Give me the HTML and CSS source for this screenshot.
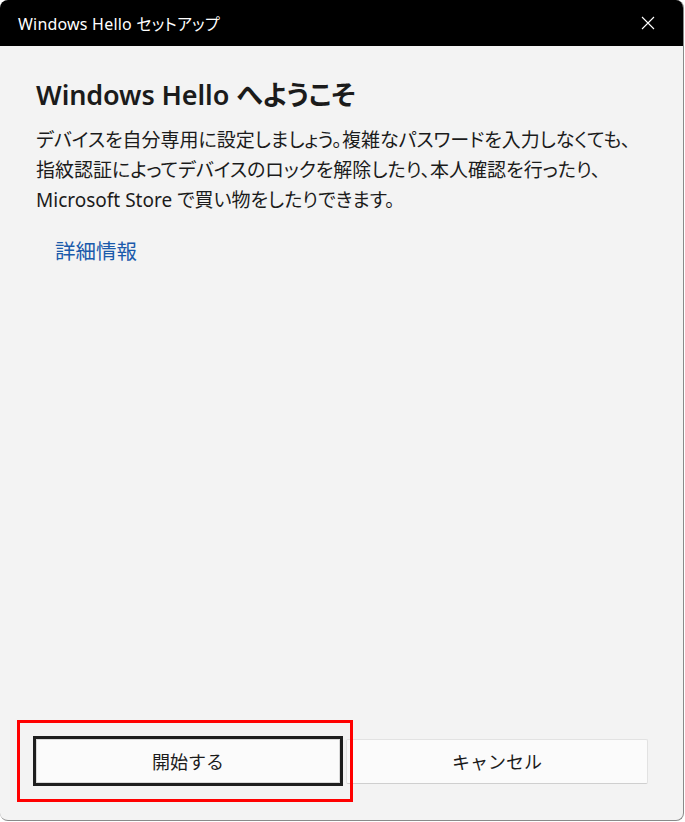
FILE: index.html
```html
<!DOCTYPE html>
<html lang="ja">
<head>
    <meta charset="UTF-8">
    <meta name="viewport" content="width=device-width, initial-scale=1.0">
    <title>Windows Hello セットアップ</title>
    <link rel="stylesheet" href="styles.css">
</head>
<body>
    <div class="window">
        <div class="titlebar">
            <span class="titlebar-text">Windows Hello セットアップ</span>
            <button class="close" aria-label="閉じる">
                <svg width="14" height="14" viewBox="0 0 14 14">
                    <path d="M1 1 L13 13 M13 1 L1 13" stroke="#fff" stroke-width="1.1" fill="none"/>
                </svg>
            </button>
        </div>
        <div class="content">
            <h1 class="heading">Windows Hello へようこそ</h1>
            <p class="description">デバイスを自分専用に設定しましょう。複雑なパスワードを入力しなくても、<br>指紋認証によってデバイスのロックを解除したり、本人確認を行ったり、<br>Microsoft Store で買い物をしたりできます。</p>
            <a class="more-link" href="#">詳細情報</a>
        </div>
        <div class="footer">
            <button class="btn btn-primary">開始する</button>
            <button class="btn">キャンセル</button>
            <div class="highlight"></div>
        </div>
    </div>
</body>
</html>
```

FILE: styles.css
```css
body {
    margin: 0;
    background-color: #ffffff;
    font-family: 'Noto Sans', 'Noto Sans CJK JP', sans-serif;
    color: #1b1b1b;
}
.window {
    width: 683px;
    height: 820px;
    display: flex;
    flex-direction: column;
    background-color: #f3f3f3;
    border-radius: 8px;
    border-right: 1px solid #8a8a8a;
    border-bottom: 1px solid #8a8a8a;
    overflow: hidden;
}
.titlebar {
    height: 46px;
    flex-shrink: 0;
    display: flex;
    align-items: center;
    justify-content: space-between;
    background-color: #000000;
    padding-left: 18px;
}
.titlebar-text {
    color: #ffffff;
    font-size: 16px;
    letter-spacing: 0.2px;
    font-feature-settings: "palt";
}
.close {
    width: 46px;
    height: 46px;
    margin-right: 12px;
    display: flex;
    align-items: center;
    justify-content: center;
    background: none;
    border: none;
    padding: 0;
}
.content {
    flex: 1;
    padding: 28px 36px 0 36px;
}
.heading {
    margin: 0 0 9px 0;
    font-size: 27px;
    font-weight: 600;
    letter-spacing: -0.1px;
    line-height: 42px;
    font-feature-settings: "palt";
}
.description {
    margin: 0;
    font-size: 19px;
    line-height: 30px;
    font-feature-settings: "palt";
}
.more-link {
    display: inline-block;
    margin: 21px 0 0 19px;
    font-size: 20.5px;
    line-height: 30px;
    color: #1a5aab;
    text-decoration: none;
}
.footer {
    position: relative;
    display: flex;
    align-items: center;
    padding: 0 35px 34px 33px;
    height: 50px;
}
.btn {
    height: 45px;
    width: 302px;
    margin-left: 3px;
    font-family: 'Noto Sans', 'Noto Sans CJK JP', sans-serif;
    font-size: 18px;
    color: #1b1b1b;
    background-color: #fbfbfb;
    border: 1px solid #e2e2e2;
    border-bottom-color: #cfcfcf;
    border-radius: 2px;
    padding: 0;
}
.btn-primary {
    width: 310px;
    height: 50px;
    margin-left: 0;
    border: 3px solid #1e1e1e;
    box-shadow: inset 0 0 0 1px #d9d9d9;
    border-radius: 0;
}
.highlight {
    position: absolute;
    left: 17px;
    top: -16px;
    width: 330px;
    height: 76px;
    border: 3px solid #ff0000;
}
```
